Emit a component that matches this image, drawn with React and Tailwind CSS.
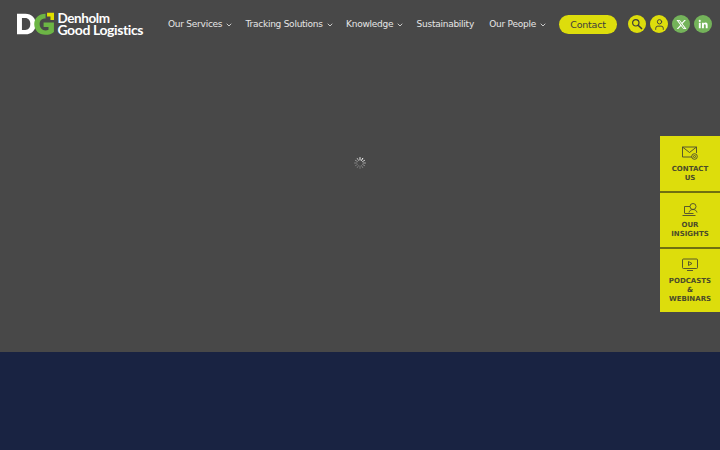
import React from "react";
import { ChevronDown, User } from "lucide-react";

const navItems = [
  { label: "Our Services", caret: true },
  { label: "Tracking Solutions", caret: true },
  { label: "Knowledge", caret: true },
  { label: "Sustainability", caret: false },
  { label: "Our People", caret: true },
];

const Logo = () => (
  <div className="flex w-[126px] shrink-0 items-center">
    <svg width="38" height="24" viewBox="0 0 38 24" fill="none">
      <path d="M0 1.500h8.500c6.500 0 10.500 4.300 10.500 10.500s-4 10.500-10.500 10.500H0z" fill="#fff" />
      <path d="M5 6h3.300c3.300 0 5.200 2.400 5.200 6s-1.900 6-5.200 6H5z" fill="#484848" />
      <path d="M29 1.500C22 1.500 17.500 6 17.500 12S22 23 29 23c3.300 0 6.500-1 8.500-3V10.500H27v4.500h5v2.800c-.9.500-2 .7-3 .7-3.600 0-6-2.800-6-6.500S25.400 6.500 29 6.500z" fill="#6cb545" />
      <path d="M30.500 0.500H38v7.500h-4V4.500h-3.500z" fill="#dfe000" />
    </svg>
    <div className="ml-[3px] flex flex-col whitespace-nowrap font-['Lato',sans-serif] text-[13.500px] leading-[12.500px] font-bold tracking-[-0.4px] text-white">
      <span>Denholm</span>
      <span className="text-[14px] tracking-[-0.4px]">Good Logistics</span>
    </div>
  </div>
);

const NavLink = ({ item }) => (
  <div className={"flex items-center gap-[3px] whitespace-nowrap text-[#e6e6e6] " + (item.caret ? "" : "pr-[3px]")}>
    <span>{item.label}</span>
    {item.caret && <ChevronDown size={8} strokeWidth={2.5} className="mt-[1px]" />}
  </div>
);

const RoundIcon = ({ green, children }) => (
  <div
    className={
      "flex h-[18px] w-[18px] items-center justify-center rounded-full " +
      (green ? "bg-[#74b35a] text-white" : "bg-[#dddd0c] text-[#3c3c3c]")
    }
  >
    {children}
  </div>
);

const MailIcon = () => (
  <svg width="16" height="14" viewBox="0 0 16 14" fill="none" stroke="#4a4a30" strokeWidth="0.9">
    <path d="M10 11H.5V1h14v6" />
    <path d="M.5 1L7.500 6.500 14.500 1" />
    <circle cx="12.500" cy="10.500" r="2.800" />
    <circle cx="12.500" cy="10.500" r="1" />
  </svg>
);

const InsightsIcon = () => (
  <svg width="16" height="14" viewBox="0 0 16 14" fill="none" stroke="#4a4a30" strokeWidth="0.9">
    <path d="M2.500 10V3.500h5.500M.5 12.500h13M2.500 10.500h9" />
    <circle cx="11" cy="3.500" r="3" />
    <path d="M7 9.500c.5-2 2-3 4-3s3.500 1 4 3" />
  </svg>
);

const PlayIcon = () => (
  <svg width="16" height="14" viewBox="0 0 16 14" fill="none" stroke="#4a4a30" strokeWidth="0.9">
    <rect x="0.500" y="1" width="15" height="9.500" rx="1" />
    <path d="M6.500 3.500v4l3.500-2z" />
    <path d="M5 12.500h6" />
  </svg>
);

const SideItem = ({ icon, lines, className }) => (
  <div className={"flex w-[60px] flex-col items-center bg-[#dddd0c] " + className}>
    {icon}
    <div className="text-center font-['DejaVu_Sans',sans-serif] text-[7px] leading-[9px] font-bold text-[#4b4b2a]">
      {lines.map((l) => (
        <div key={l}>{l}</div>
      ))}
    </div>
  </div>
);

const Spinner = () => (
  <svg width="12" height="12" viewBox="0 0 12 12" stroke="#fff" strokeLinecap="round" strokeWidth="1">
    <path d="M6 .5v2.500" opacity="0.900" />
    <path d="M8.800 1.300L7.500 3.400" opacity="1" />
    <path d="M10.700 3.300L8.600 4.500" opacity="0.700" />
    <path d="M11.500 6H9" opacity="0.500" />
    <path d="M10.700 8.700L8.600 7.500" opacity="0.350" />
    <path d="M8.800 10.700L7.500 8.600" opacity="0.300" />
    <path d="M6 11.500V9" opacity="0.250" />
    <path d="M3.200 10.700l1.300-2.100" opacity="0.250" />
    <path d="M1.300 8.700l2.100-1.200" opacity="0.250" />
    <path d="M.5 6H3" opacity="0.300" />
    <path d="M1.300 3.300l2.100 1.200" opacity="0.400" />
    <path d="M3.200 1.300l1.300 2.100" opacity="0.600" />
  </svg>
);

export default function App() {
  return (
    <div className="relative flex h-[450px] w-[720px] flex-col overflow-hidden bg-[#484848] font-['DejaVu_Sans',sans-serif]">
      <header className="flex h-[48px] items-center pl-[17px]">
        <Logo />
        <nav className="ml-[25px] flex w-[379px] shrink-0 items-center justify-between pt-[1px] text-[9px] tracking-[-0.25px]">
          {navItems.map((item) => (
            <NavLink key={item.label} item={item} />
          ))}
        </nav>
        <button className="ml-[12px] h-[19px] w-[58px] shrink-0 rounded-full bg-[#dddd0c] text-[9.500px] leading-[19px] tracking-[-0.2px] text-[#3c3c3c]">
          Contact
        </button>
        <div className="ml-[11px] flex items-center gap-[4px]">
          <RoundIcon>
            <svg width="12" height="12" viewBox="0 0 12 12" fill="none" stroke="#3c3c3c" strokeWidth="1.200">
              <circle cx="4.800" cy="4.800" r="3.200" />
              <path d="M7.200 7.200L11 11" strokeWidth="1.600" />
            </svg>
          </RoundIcon>
          <RoundIcon>
            <User size={13} strokeWidth={1.7} />
          </RoundIcon>
          <RoundIcon green>
            <svg width="11" height="11" viewBox="0 0 24 24" fill="#fff">
              <path d="M18.200 2h3.400l-7.400 8.500L23 22h-6.800l-5.300-7-6.100 7H1.400l7.900-9.100L1 2h7l4.800 6.400zM17 20h1.900L7 3.900H5z" />
            </svg>
          </RoundIcon>
          <RoundIcon green>
            <svg width="10" height="10" viewBox="0 0 24 24" fill="#fff">
              <path d="M2 9h4.500v13H2zM4.200 2a2.500 2.500 0 1 1 0 5 2.500 2.500 0 0 1 0-5zM9.500 9h4.300v1.800c.7-1.200 2.200-2.200 4.300-2.200 4.400 0 5 2.900 5 6.500V22h-4.500v-6c0-1.500 0-3.400-2.100-3.400s-2.400 1.600-2.400 3.300V22H9.500z" />
            </svg>
          </RoundIcon>
        </div>
      </header>

      <main className="flex h-[304px] justify-center pt-[109px]">
        <Spinner />
      </main>

      <footer className="flex-1 bg-[#192342]" />

      <aside className="absolute top-[136px] right-0 flex flex-col gap-[2px] bg-[#6f6f10]">
        <SideItem icon={<MailIcon />} lines={["CONTACT", "US"]} className="h-[55px] gap-[5px] pt-[10px]" />
        <SideItem icon={<InsightsIcon />} lines={["OUR", "INSIGHTS"]} className="h-[54px] gap-[4px] pt-[10px]" />
        <SideItem icon={<PlayIcon />} lines={["PODCASTS", "&", "WEBINARS"]} className="h-[63px] gap-[5px] pt-[9px]" />
      </aside>
    </div>
  );
}
